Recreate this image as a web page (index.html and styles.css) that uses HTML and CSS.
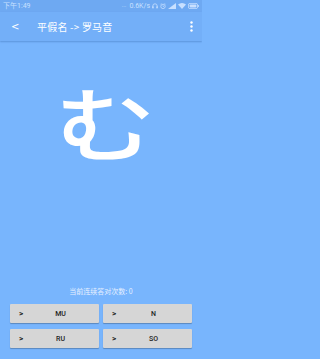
FILE: index.html
```html
<!DOCTYPE html>
<html lang="zh">
<head>
<meta charset="utf-8">
<link rel="stylesheet" href="styles.css">
</head>
<body>
<div class="app">
  <div class="statusbar">
    <span class="time">下午1:49</span>
    <div class="status-right">
      <span class="dots">...</span>
      <span class="speed">0.6K/s</span>
      <svg class="si" width="6" height="6" viewBox="0 0 6 6"><path d="M0.8 5V3a2.2 2.2 0 0 1 4.4 0v2" fill="none" stroke="#c8e0ff" stroke-width="0.8"/><rect x="0.4" y="3.4" width="1.2" height="2" fill="#c8e0ff"/><rect x="4.4" y="3.4" width="1.2" height="2" fill="#c8e0ff"/></svg>
      <svg class="si" width="6" height="6" viewBox="0 0 6 6"><circle cx="3" cy="3.4" r="2.2" fill="none" stroke="#c8e0ff" stroke-width="0.8"/><path d="M3 2.2v1.3h1" fill="none" stroke="#c8e0ff" stroke-width="0.6"/><path d="M0.5 1.2l1-0.8M5.5 1.2l-1-0.8" stroke="#c8e0ff" stroke-width="0.7"/></svg>
      <svg class="si" width="8" height="6" viewBox="0 0 8 6"><path d="M0 6L8 0V6Z" fill="#c8e0ff"/></svg>
      <svg class="si" width="8" height="6" viewBox="0 0 8 6"><path d="M4 6L0 1.6a6 6 0 0 1 8 0Z" fill="#c8e0ff"/></svg>
      <svg class="si" width="11" height="6" viewBox="0 0 11 6"><rect x="0.4" y="0.4" width="9.2" height="5.2" rx="1.6" fill="none" stroke="#c8e0ff" stroke-width="0.8"/><rect x="9.8" y="2" width="1" height="2" fill="#c8e0ff"/><rect x="1.6" y="1.6" width="6.8" height="2.8" rx="0.8" fill="#c8e0ff"/></svg>
    </div>
  </div>
  <div class="toolbar">
    <span class="back">&lt;</span>
    <span class="title">平假名 -&gt; 罗马音</span>
    <svg class="more" width="3" height="11" viewBox="0 0 3 11"><circle cx="1.5" cy="1.5" r="1.2" fill="#fff"/><circle cx="1.5" cy="5.5" r="1.2" fill="#fff"/><circle cx="1.5" cy="9.5" r="1.2" fill="#fff"/></svg>
  </div>
  <main class="content">
    <div class="kana-area">
      <span class="kana">む</span>
    </div>
    <div class="streak">当前连续答对次数: 0</div>
    <div class="answers">
      <button class="answer"><span class="chev">&gt;</span><span class="label">MU</span></button>
      <button class="answer"><span class="chev">&gt;</span><span class="label">N</span></button>
      <button class="answer"><span class="chev">&gt;</span><span class="label">RU</span></button>
      <button class="answer"><span class="chev">&gt;</span><span class="label">SO</span></button>
    </div>
  </main>
</div>
</body>
</html>
```
FILE: styles.css
```css
html, body {
  margin: 0;
  padding: 0;
}
body {
  width: 202px;
  height: 359px;
  overflow: hidden;
  background: #78b5fd;
  font-family: Roboto, "Noto Sans CJK SC", sans-serif;
}
.app {
  display: flex;
  flex-direction: column;
  height: 359px;
}
.statusbar {
  height: 12px;
  background: #6ea9f2;
  display: flex;
  align-items: center;
  justify-content: space-between;
  padding: 0 3px 0 3px;
  color: #c8e0ff;
  font-size: 7px;
  line-height: 1;
}
.status-right {
  display: flex;
  align-items: center;
  gap: 2px;
}
.dots {
  font-size: 6px;
  margin-right: 1px;
  position: relative;
  top: -1px;
}
.si {
  display: block;
}
.toolbar {
  height: 29px;
  background: #73aff8;
  display: flex;
  align-items: center;
  padding: 0 9px 0 11px;
  color: #fff;
  box-shadow: 0 1px 1.5px rgba(40, 90, 160, 0.35);
  position: relative;
  z-index: 1;
}
.back {
  font-family: "DejaVu Sans", sans-serif;
  font-size: 10px;
  width: 26px;
}
.title {
  flex: 1;
  font-family: "Noto Sans CJK SC", sans-serif;
  font-size: 10px;
  letter-spacing: 0.2px;
}
.more {
  display: block;
}
.content {
  flex: 1;
  display: flex;
  flex-direction: column;
  padding: 0 10px 11px 10px;
}
.kana-area {
  flex: 1;
  display: flex;
  justify-content: center;
  padding-top: 19px;
  padding-left: 8px;
}
.kana {
  font-family: "Noto Sans CJK JP", sans-serif;
  font-size: 92px;
  font-weight: 500;
  line-height: 104px;
  color: #fff;
  display: inline-block;
  transform: scale(1.1, 0.88);
}
.streak {
  text-align: center;
  font-family: "Noto Sans CJK SC", sans-serif;
  font-size: 7px;
  color: #e6f0ff;
  margin-bottom: 8px;
}
.answers {
  display: grid;
  grid-template-columns: 1fr 1fr;
  gap: 6px 4px;
}
.answer {
  height: 19px;
  border: none;
  border-radius: 1px;
  background: #d6d6d6;
  box-shadow: 0 1px 1px rgba(0, 0, 0, 0.25);
  display: flex;
  align-items: center;
  padding: 0 0 0 9px;
  font-family: Roboto, sans-serif;
  font-size: 7px;
  font-weight: 500;
  color: #222;
}
.chev {
  width: 5px;
  text-align: left;
  font-size: 8px;
  font-weight: 700;
}
.label {
  flex: 1;
  text-align: center;
  padding-right: 2px;
}
```
